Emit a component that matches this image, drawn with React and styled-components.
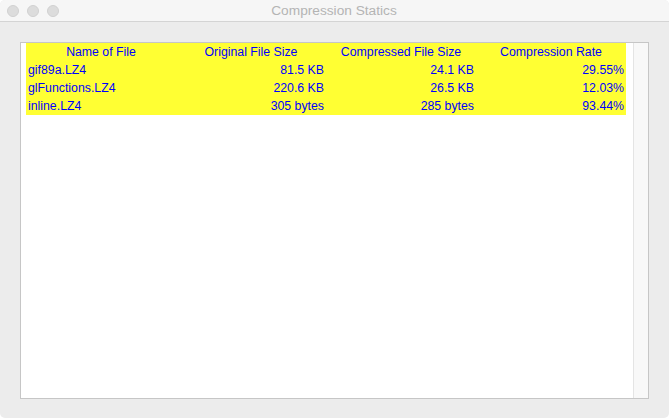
import styled, { createGlobalStyle } from "styled-components"

const GlobalStyle = createGlobalStyle`
    html, body {
        margin: 0;
        padding: 0;
        background: #ffffff;
    }
    * {
        box-sizing: border-box;
    }
`

const files = [
    { name: "gif89a.LZ4", original: "81.5 KB", compressed: "24.1 KB", rate: "29.55%" },
    { name: "glFunctions.LZ4", original: "220.6 KB", compressed: "26.5 KB", rate: "12.03%" },
    { name: "inline.LZ4", original: "305 bytes", compressed: "285 bytes", rate: "93.44%" },
]

const Window = styled.div`
    width: 669px;
    height: 418px;
    background: #ececec;
    border-radius: 5px;
    overflow: hidden;
    display: flex;
    flex-direction: column;
    font-family: "Liberation Sans", Arial, sans-serif;
`

const TitleBar = styled.div`
    height: 22px;
    flex-shrink: 0;
    background: #f6f6f6;
    border-bottom: 1px solid #d4d4d4;
    display: flex;
    align-items: center;
`

const Lights = styled.div`
    display: flex;
    gap: 8px;
    padding-left: 7px;
`

const Light = styled.span`
    width: 12px;
    height: 12px;
    border-radius: 50%;
    background: #dcdcdc;
    border: 1px solid #d0d0d0;
`

const Title = styled.div`
    flex: 1;
    text-align: center;
    margin-left: -60px;
    font-size: 13.7px;
    color: #b4b4b4;
`

const Content = styled.div`
    flex: 1;
    padding: 20px 20px 19px 20px;
    display: flex;
`

const Panel = styled.div`
    flex: 1;
    background: #ffffff;
    border: 1px solid #c6c6c6;
    display: flex;
`

const TableArea = styled.div`
    flex: 1;
    padding-left: 5px;
`

const Scrollbar = styled.div`
    width: 15px;
    background: #f8f8f8;
    border-left: 1px solid #e4e4e4;
`

const Table = styled.div`
    width: 600px;
    background: #ffff33;
    color: #0000ff;
    font-size: 12.3px;
`

const Row = styled.div`
    display: grid;
    grid-template-columns: repeat(4, 150px);
    height: 18px;
    align-items: center;
`

const Cell = styled.div`
    padding: 0 2px;
    white-space: nowrap;
    text-align: ${(p) => p.$align || "right"};
`

const App = () => {
    return (
        <>
            <GlobalStyle />
            <Window>
                <TitleBar>
                    <Lights>
                        <Light />
                        <Light />
                        <Light />
                    </Lights>
                    <Title>Compression Statics</Title>
                </TitleBar>
                <Content>
                    <Panel>
                        <TableArea>
                            <Table>
                                <Row>
                                    <Cell $align="center">Name of File</Cell>
                                    <Cell $align="center">Original File Size</Cell>
                                    <Cell $align="center">Compressed File Size</Cell>
                                    <Cell $align="center">Compression Rate</Cell>
                                </Row>
                                {files.map((f) => (
                                    <Row key={f.name}>
                                        <Cell $align="left">{f.name}</Cell>
                                        <Cell>{f.original}</Cell>
                                        <Cell>{f.compressed}</Cell>
                                        <Cell>{f.rate}</Cell>
                                    </Row>
                                ))}
                            </Table>
                        </TableArea>
                        <Scrollbar />
                    </Panel>
                </Content>
            </Window>
        </>
    )
}

export default App
